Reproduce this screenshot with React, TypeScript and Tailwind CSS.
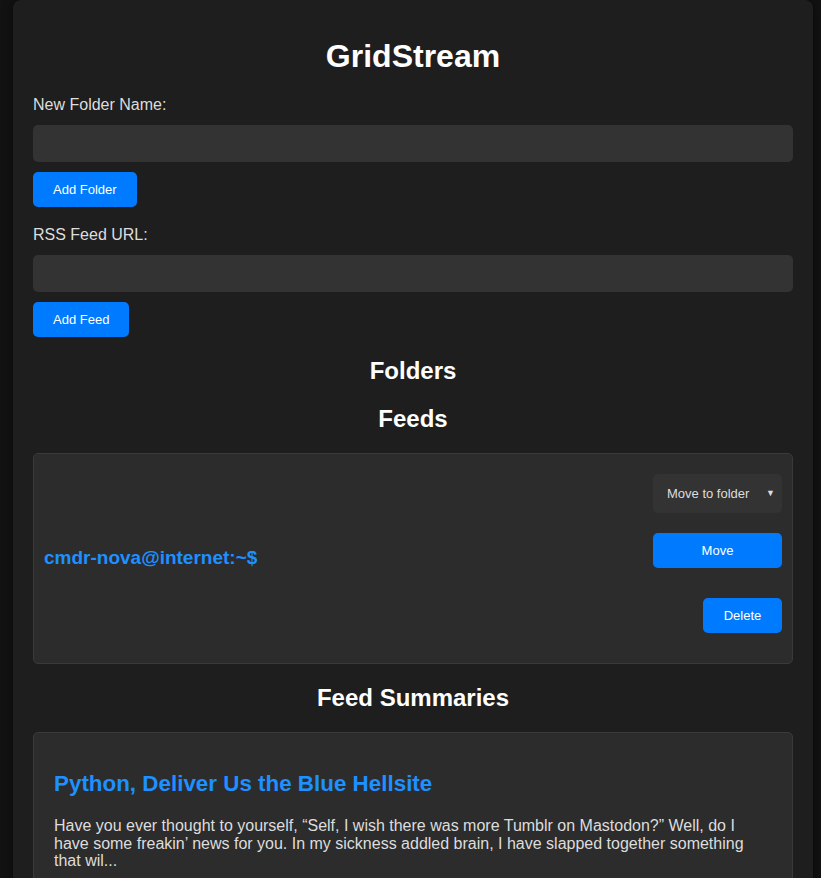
import React from 'react'

const font = { fontFamily: '"Liberation Sans", Arial, sans-serif' }

export default function App() {
  return (
    <div className="min-h-[878px] bg-[#121212] overflow-hidden" style={font}>
      <div className="ml-[13px] w-[800px] rounded-lg bg-[#1e1e1e] px-5 pt-5 pb-10 shadow-[0_0_10px_rgba(0,0,0,0.5)]">
        <h1 className="mt-[18px] mb-[21px] text-center text-[32px] leading-[37px] font-bold text-white">GridStream</h1>

        <label className="block mb-[11px] text-[16px] leading-[18px] text-[#dddddd]">New Folder Name:</label>
        <input className="block w-full h-[37px] rounded-[5px] bg-[#333333] px-2.5 text-[#dddddd] outline-none" />
        <button className="mt-[10px] h-[35px] rounded-[5px] bg-[#007bff] px-5 text-[13px] text-white">Add Folder</button>

        <label className="block mt-[19px] mb-[11px] text-[16px] leading-[18px] text-[#dddddd]">RSS Feed URL:</label>
        <input className="block w-full h-[37px] rounded-[5px] bg-[#333333] px-2.5 text-[#dddddd] outline-none" />
        <button className="mt-[10px] h-[35px] rounded-[5px] bg-[#007bff] px-5 text-[13px] text-white">Add Feed</button>

        <h2 className="mt-[20px] text-center text-[24px] leading-[28px] font-bold text-white">Folders</h2>
        <h2 className="mt-[20px] text-center text-[24px] leading-[28px] font-bold text-white">Feeds</h2>

        <div className="mt-[20px] flex items-center justify-between rounded-[5px] border border-[#3a3a3a] bg-[#2c2c2c] p-[10px]">
          <span className="text-[19px] font-bold text-[#1e90ff]">cmdr-nova@internet:~$</span>
          <div className="flex flex-col items-end pt-[10px] pb-[20px]">
            <div className="flex h-[39px] w-[129px] items-center justify-between rounded-[5px] bg-[#333333] pl-[14px] pr-[7px] text-[13px] text-[#dddddd]">
              <span>Move to folder</span>
              <span className="text-[9px]">▼</span>
            </div>
            <button className="mt-[20px] h-[35px] w-[129px] rounded-[5px] bg-[#007bff] text-[13px] text-white">Move</button>
            <button className="mt-[30px] h-[35px] w-[79px] rounded-[5px] bg-[#007bff] text-[13px] text-white">Delete</button>
          </div>
        </div>

        <h2 className="mt-[20px] text-center text-[24px] leading-[28px] font-bold text-white">Feed Summaries</h2>

        <div className="mt-[20px] rounded-[5px] border border-[#3a3a3a] bg-[#2c2c2c] px-5 pt-5 pb-5">
          <h3 className="mt-[18px] text-[22.4px] leading-[26px] font-bold text-[#1e90ff]">Python, Deliver Us the Blue Hellsite</h3>
          <p className="mt-[20px] text-[16px] leading-[17.5px] text-[#dddddd]">
            Have you ever thought to yourself, “Self, I wish there was more Tumblr on Mastodon?” Well, do I have some freakin’ news for you. In my sickness addled brain, I have slapped together something that wil...
          </p>
        </div>
      </div>
    </div>
  )
}
